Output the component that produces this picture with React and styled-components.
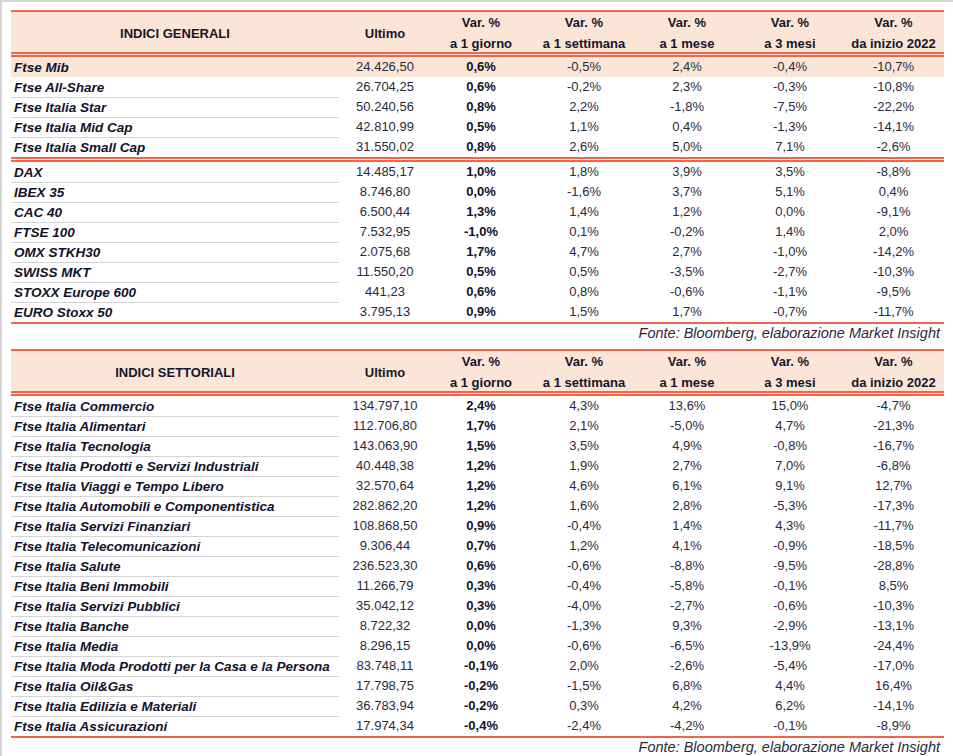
import React from 'react'
import styled, { createGlobalStyle } from 'styled-components'

const GlobalStyle = createGlobalStyle`
    html, body {
        margin: 0;
        padding: 0;
        background: #ffffff;
    }
    body {
        font-family: "Liberation Sans", Arial, sans-serif;
        color: #1b1b2c;
    }
`

const RED = '#f0654b'
const PEACH = '#fbe5d6'
const COLS = '328px 92px 100px 106px 100px 106px 101px'

const generali = [
    [
        ['Ftse Mib', '24.426,50', '0,6%', '-0,5%', '2,4%', '-0,4%', '-10,7%'],
        ['Ftse All-Share', '26.704,25', '0,6%', '-0,2%', '2,3%', '-0,3%', '-10,8%'],
        ['Ftse Italia Star', '50.240,56', '0,8%', '2,2%', '-1,8%', '-7,5%', '-22,2%'],
        ['Ftse Italia Mid Cap', '42.810,99', '0,5%', '1,1%', '0,4%', '-1,3%', '-14,1%'],
        ['Ftse Italia Small Cap', '31.550,02', '0,8%', '2,6%', '5,0%', '7,1%', '-2,6%'],
    ],
    [
        ['DAX', '14.485,17', '1,0%', '1,8%', '3,9%', '3,5%', '-8,8%'],
        ['IBEX 35', '8.746,80', '0,0%', '-1,6%', '3,7%', '5,1%', '0,4%'],
        ['CAC 40', '6.500,44', '1,3%', '1,4%', '1,2%', '0,0%', '-9,1%'],
        ['FTSE 100', '7.532,95', '-1,0%', '0,1%', '-0,2%', '1,4%', '2,0%'],
        ['OMX STKH30', '2.075,68', '1,7%', '4,7%', '2,7%', '-1,0%', '-14,2%'],
        ['SWISS MKT', '11.550,20', '0,5%', '0,5%', '-3,5%', '-2,7%', '-10,3%'],
        ['STOXX Europe 600', '441,23', '0,6%', '0,8%', '-0,6%', '-1,1%', '-9,5%'],
        ['EURO Stoxx 50', '3.795,13', '0,9%', '1,5%', '1,7%', '-0,7%', '-11,7%'],
    ],
]

const settoriali = [
    [
        ['Ftse Italia Commercio', '134.797,10', '2,4%', '4,3%', '13,6%', '15,0%', '-4,7%'],
        ['Ftse Italia Alimentari', '112.706,80', '1,7%', '2,1%', '-5,0%', '4,7%', '-21,3%'],
        ['Ftse Italia Tecnologia', '143.063,90', '1,5%', '3,5%', '4,9%', '-0,8%', '-16,7%'],
        ['Ftse Italia Prodotti e Servizi Industriali', '40.448,38', '1,2%', '1,9%', '2,7%', '7,0%', '-6,8%'],
        ['Ftse Italia Viaggi e Tempo Libero', '32.570,64', '1,2%', '4,6%', '6,1%', '9,1%', '12,7%'],
        ['Ftse Italia Automobili e Componentistica', '282.862,20', '1,2%', '1,6%', '2,8%', '-5,3%', '-17,3%'],
        ['Ftse Italia Servizi Finanziari', '108.868,50', '0,9%', '-0,4%', '1,4%', '4,3%', '-11,7%'],
        ['Ftse Italia Telecomunicazioni', '9.306,44', '0,7%', '1,2%', '4,1%', '-0,9%', '-18,5%'],
        ['Ftse Italia Salute', '236.523,30', '0,6%', '-0,6%', '-8,8%', '-9,5%', '-28,8%'],
        ['Ftse Italia Beni Immobili', '11.266,79', '0,3%', '-0,4%', '-5,8%', '-0,1%', '8,5%'],
        ['Ftse Italia Servizi Pubblici', '35.042,12', '0,3%', '-4,0%', '-2,7%', '-0,6%', '-10,3%'],
        ['Ftse Italia Banche', '8.722,32', '0,0%', '-1,3%', '9,3%', '-2,9%', '-13,1%'],
        ['Ftse Italia Media', '8.296,15', '0,0%', '-0,6%', '-6,5%', '-13,9%', '-24,4%'],
        ['Ftse Italia Moda Prodotti per la Casa e la Persona', '83.748,11', '-0,1%', '2,0%', '-2,6%', '-5,4%', '-17,0%'],
        ['Ftse Italia Oil&Gas', '17.798,75', '-0,2%', '-1,5%', '6,8%', '4,4%', '16,4%'],
        ['Ftse Italia Edilizia e Materiali', '36.783,94', '-0,2%', '0,3%', '4,2%', '6,2%', '-14,1%'],
        ['Ftse Italia Assicurazioni', '17.974,34', '-0,4%', '-2,4%', '-4,2%', '-0,1%', '-8,9%'],
    ],
]

const periods = ['a 1 giorno', 'a 1 settimana', 'a 1 mese', 'a 3 mesi', 'da inizio 2022']

function IndexTable({ title, groups, highlightFirst }) {
    return (
        <Table>
            <HeadRow>
                <HeadCell>{title}</HeadCell>
                <HeadCell>Ultimo</HeadCell>
                {periods.map(p => (
                    <HeadCell key={p}>
                        <span>Var. %</span>
                        <span>{p}</span>
                    </HeadCell>
                ))}
            </HeadRow>
            {groups.map((rows, g) => (
                <Group key={g} last={g === groups.length - 1}>
                    {rows.map((r, i) => {
                        const highlight = highlightFirst && g === 0 && i === 0
                        const afterHighlight = highlightFirst && g === 0 && i === 1
                        return (
                            <Row key={r[0]} highlight={highlight}>
                                <Name divider={i > 0 && !afterHighlight}>{r[0]}</Name>
                                <Value>{r[1]}</Value>
                                <Value bold>{r[2]}</Value>
                                <Value>{r[3]}</Value>
                                <Value>{r[4]}</Value>
                                <Value>{r[5]}</Value>
                                <Value>{r[6]}</Value>
                            </Row>
                        )
                    })}
                </Group>
            ))}
        </Table>
    )
}

export default function App() {
    return (
        <Frame>
            <GlobalStyle />
            <IndexTable title="INDICI GENERALI" groups={generali} highlightFirst />
            <Source>Fonte: Bloomberg, elaborazione Market Insight</Source>
            <IndexTable title="INDICI SETTORIALI" groups={settoriali} />
            <Source>Fonte: Bloomberg, elaborazione Market Insight</Source>
        </Frame>
    )
}

const Frame = styled.div`
    width: 953px;
    height: 756px;
    box-sizing: border-box;
    border-left: 2px solid #d6d6d6;
    border-top: 2px solid #d6d6d6;
    padding: 8px 0 0 9px;
    overflow: hidden;
`

const Table = styled.div`
    width: 933px;
    border-top: 2px solid ${RED};
`

const HeadRow = styled.div`
    display: grid;
    grid-template-columns: ${COLS};
    height: 40px;
    background: ${PEACH};
    border-bottom: 5px double ${RED};
`

const HeadCell = styled.div`
    display: flex;
    flex-direction: column;
    align-items: center;
    justify-content: center;
    font-size: 13px;
    font-weight: 700;
    line-height: 21px;
    color: #16162a;
    white-space: nowrap;
`

const Group = styled.div`
    border-bottom: ${p => (p.last ? `2px solid ${RED}` : `5px double ${RED}`)};
`

const Row = styled.div`
    display: grid;
    grid-template-columns: ${COLS};
    height: 20px;
    background: ${p => (p.highlight ? PEACH : 'transparent')};
`

const Name = styled.div`
    box-sizing: border-box;
    padding-left: 3px;
    font-size: 13.5px;
    font-weight: 700;
    font-style: italic;
    line-height: 19px;
    color: #12122a;
    white-space: nowrap;
    border-top: 1px solid ${p => (p.divider ? '#d4d4d4' : 'transparent')};
`

const Value = styled.div`
    text-align: center;
    font-size: 13px;
    line-height: 20px;
    font-weight: ${p => (p.bold ? 700 : 400)};
    color: ${p => (p.bold ? '#12122a' : '#2a2a3c')};
    white-space: nowrap;
`

const Source = styled.div`
    width: 933px;
    text-align: right;
    box-sizing: border-box;
    padding-right: 4px;
    font-size: 14.5px;
    font-style: italic;
    line-height: 18px;
    height: 25px;
    color: #2a2a3c;
`
